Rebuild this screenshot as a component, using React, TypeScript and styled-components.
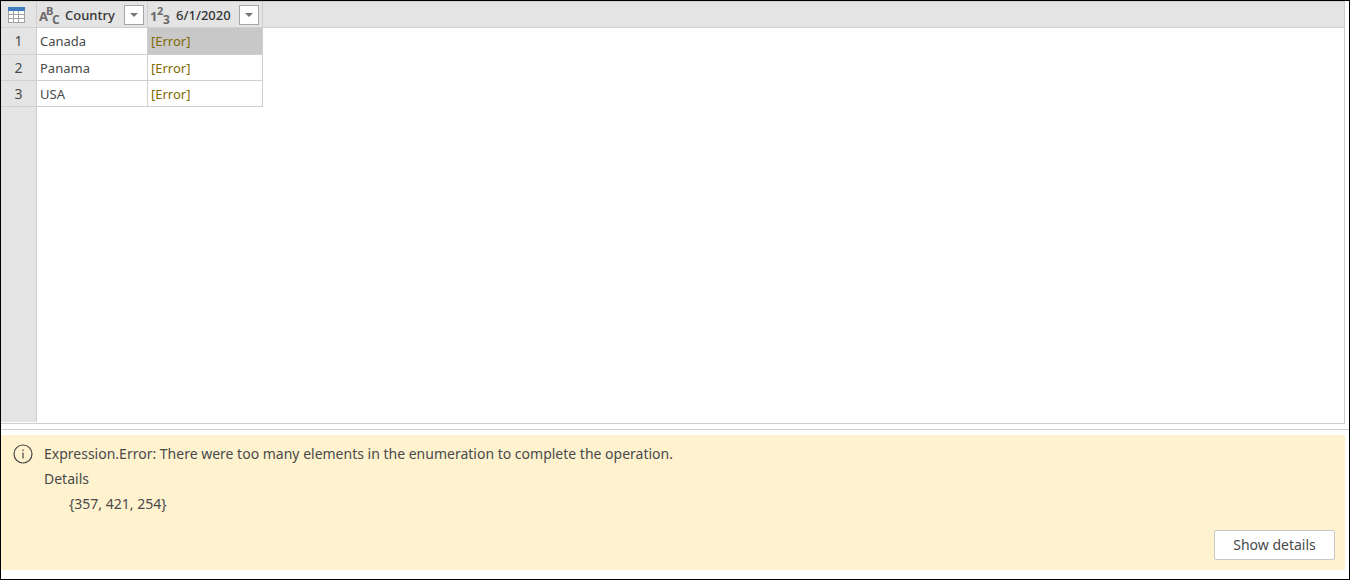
import React from "react";
import styled, { createGlobalStyle } from "styled-components";

const GlobalStyle = createGlobalStyle`
  * { box-sizing: border-box; }
  body { margin: 0; background: #fff; }
  body, button { font-family: "Noto Sans", "Open Sans", sans-serif; }
`;

const Page = styled.main`
  display: flex;
  flex-direction: column;
  min-height: 100vh;
  border: 1px solid #000;
  color: #4a4a4a;
`;

const GridPanel = styled.section`
  display: flex;
  flex: 1;
  flex-direction: column;
  margin-right: 4px;
  padding-bottom: 1px;
  border: solid #cfcfcf;
  border-width: 1px 1px 1px 0;
`;

const Table = styled.table`
  width: 100%;
  table-layout: fixed;
  border-collapse: separate;
  border-spacing: 0;
  font-size: 13px;
  line-height: 18px;
`;

const Col = styled.col<{ $width?: number }>`
  width: ${(p) => (p.$width ? `${p.$width}px` : "auto")};
`;

const HeaderCell = styled.th<{ $open?: boolean }>`
  height: 26px;
  padding: 0;
  background: #e4e4e4;
  border: solid #cfcfcf;
  border-width: ${(p) => (p.$open ? "0 0 1px" : "0 1px 1px 0")};
  text-align: left;
  font-weight: 500;
  color: #333;
`;

const HeaderContent = styled.div`
  display: flex;
  align-items: center;
  gap: 5px;
  height: 25px;
  padding: 0 3px 0 2px;
`;

const HeaderLabel = styled.span`
  flex: 1;
  white-space: nowrap;
`;

const TableMenuButton = styled.button`
  display: block;
  margin: 0;
  padding: 0 0 0 7px;
  border: 0;
  background: none;
`;

const FilterButton = styled.button`
  display: flex;
  align-items: center;
  justify-content: center;
  width: 20px;
  height: 20px;
  padding: 0;
  border: 1px solid #a6a6a6;
  background: #fff;
`;

const RowNumber = styled.th`
  padding: 0;
  background: #e4e4e4;
  border: solid #cfcfcf;
  border-width: 0 1px 1px 0;
  font-size: 14px;
  font-weight: 400;
  text-align: center;
`;

const Cell = styled.td<{ $error?: boolean; $selected?: boolean }>`
  height: ${(p) => (p.$selected ? 27 : 26)}px;
  padding: 0 3px;
  border: solid #cfcfcf;
  border-width: 0 1px 1px 0;
  background: ${(p) => (p.$selected ? "#c8c8c8" : "#fff")};
  color: ${(p) => (p.$error ? "#7f6a00" : "#4a4a4a")};
`;

const GutterTail = styled.div`
  flex: 1;
  width: 36px;
  background: #e4e4e4;
  border-right: 1px solid #cfcfcf;
`;

const Splitter = styled.hr`
  width: 100%;
  height: 1px;
  margin: 5px 0;
  border: 0;
  background: #cfcfcf;
`;

const ErrorPanel = styled.section`
  display: flex;
  flex-direction: column;
  justify-content: space-between;
  min-height: 135px;
  margin: 0 4px 9px 0;
  padding: 6px 10px 10px 12px;
  background: #fff2cf;
`;

const ErrorBody = styled.div`
  display: flex;
  gap: 11px;
  font-size: 14px;
  line-height: 25px;
`;

const InfoIcon = styled.svg`
  flex: none;
  width: 20px;
  height: 20px;
  margin-top: 3px;
`;

const ErrorLine = styled.p<{ $indent?: boolean }>`
  margin: 0;
  padding-left: ${(p) => (p.$indent ? 25 : 0)}px;
`;

const DetailsButton = styled.button`
  align-self: flex-end;
  width: 121px;
  height: 30px;
  padding: 0 0 2px;
  border: 1px solid #c8c8c8;
  border-radius: 2px;
  background: #fff;
  color: #4a4a4a;
  font-size: 14px;
`;

const TableIcon = () => (
  <svg width="17" height="16" viewBox="0 0 17 16" display="block" aria-hidden="true">
    <rect x="0" y="0" width="17" height="16" fill="#a2a2a2" />
    <rect x="0" y="0" width="17" height="4" fill="#3d7ebf" />
    {[4, 8, 12].map((y) =>
      [1, 6, 11].map((x) => (
        <rect key={`${x}-${y}`} x={x} y={y} width={x === 11 ? 5 : 4} height={3} fill="#fff" />
      ))
    )}
  </svg>
);

const TypeIcon = ({ glyphs }: { glyphs: string }) => (
  <svg width="21" height="25" viewBox="0 0 21 25" aria-hidden="true" fill="#6b6b6b" fontFamily="Open Sans, sans-serif" fontWeight="700">
    <text x="0" y="19" fontSize="13">{glyphs[0]}</text>
    <text x="7" y="13" fontSize="11">{glyphs[1]}</text>
    <text x="13" y="22" fontSize="12">{glyphs[2]}</text>
  </svg>
);

const Caret = () => (
  <svg width="8" height="4" viewBox="0 0 8 4" aria-hidden="true">
    <path d="M0 0H8L4 4Z" fill="#777" />
  </svg>
);

const columns = [
  { name: "Country", glyphs: "ABC" },
  { name: "6/1/2020", glyphs: "123" },
];

const countries = ["Canada", "Panama", "USA"];

export default function App() {
  return (
    <>
      <GlobalStyle />
      <Page>
        <GridPanel>
          <Table>
            <colgroup>
              <Col $width={36} />
              <Col $width={111} />
              <Col $width={115} />
              <Col />
            </colgroup>
            <thead>
              <tr>
                <HeaderCell>
                  <TableMenuButton aria-label="Table options">
                    <TableIcon />
                  </TableMenuButton>
                </HeaderCell>
                {columns.map((c) => (
                  <HeaderCell key={c.name} scope="col">
                    <HeaderContent>
                      <TypeIcon glyphs={c.glyphs} />
                      <HeaderLabel>{c.name}</HeaderLabel>
                      <FilterButton aria-label={`Filter ${c.name}`}>
                        <Caret />
                      </FilterButton>
                    </HeaderContent>
                  </HeaderCell>
                ))}
                <HeaderCell $open as="td" />
              </tr>
            </thead>
            <tbody>
              {countries.map((country, i) => (
                <tr key={country}>
                  <RowNumber scope="row">{i + 1}</RowNumber>
                  <Cell>{country}</Cell>
                  <Cell $error $selected={i === 0}>[Error]</Cell>
                </tr>
              ))}
            </tbody>
          </Table>
          <GutterTail />
        </GridPanel>
        <Splitter />
        <ErrorPanel>
          <ErrorBody>
            <InfoIcon viewBox="0 0 20 20" aria-hidden="true">
              <circle cx="10" cy="10" r="9" fill="none" stroke="#444" strokeWidth="1.2" />
              <path d="M10 8.5V14.5M10 5.5V7" stroke="#444" strokeWidth="1.2" />
            </InfoIcon>
            <div>
              <ErrorLine>
                Expression.Error: There were too many elements in the enumeration to complete the operation.
              </ErrorLine>
              <ErrorLine>Details</ErrorLine>
              <ErrorLine $indent>{"{357, 421, 254}"}</ErrorLine>
            </div>
          </ErrorBody>
          <DetailsButton>Show details</DetailsButton>
        </ErrorPanel>
      </Page>
    </>
  );
}
